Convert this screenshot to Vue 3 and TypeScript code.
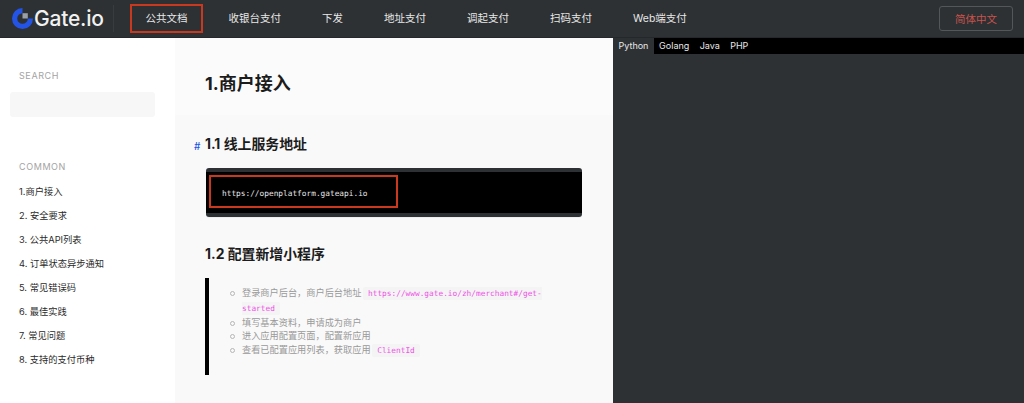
<script setup lang="ts">
const navItems: string[] = ['公共文档', '收银台支付', '下发', '地址支付', '调起支付', '扫码支付', 'Web端支付'];
const menu: string[] = ['1.商户接入', '2. 安全要求', '3. 公共API列表', '4. 订单状态异步通知', '5. 常见错误码', '6. 最佳实践', '7. 常见问题', '8. 支持的支付币种'];
const langs: string[] = ['Python', 'Golang', 'Java', 'PHP'];
</script>

<template>
  <div class="page">
    <header class="topbar">
      <div class="logo">
        <svg width="23" height="23" viewBox="0 0 23 23">
          <path d="M11.5 1a10.5 10.5 0 1 0 10.5 10.5h-5.2a5.3 5.3 0 1 1-5.3-5.3z" fill="#2354e6" />
          <rect x="11.5" y="6.2" width="5.3" height="5.3" fill="#9aa0a6" />
        </svg>
        <span class="logo-text">Gate.io</span>
      </div>
      <div class="logo-sep"></div>
      <nav class="nav">
        <a v-for="(item, i) in navItems" :key="item" class="nav-item" :class="{ marked: i === 0 }">{{ item }}</a>
      </nav>
      <button class="lang-btn">简体中文</button>
    </header>

    <div class="body">
      <aside class="sidebar">
        <div class="side-label">SEARCH</div>
        <div class="search"></div>
        <div class="side-label common">COMMON</div>
        <ul class="menu">
          <li v-for="m in menu" :key="m">{{ m }}</li>
        </ul>
      </aside>

      <main class="content">
        <div class="title-band">
          <h1>1.商户接入</h1>
        </div>
        <section class="doc">
          <h2 class="first"><span class="hash">#</span>1.1 线上服务地址</h2>
          <div class="code-block">
            <pre>https://openplatform.gateapi.io</pre>
            <span class="mark-box"></span>
          </div>
          <h2 class="second">1.2 配置新增小程序</h2>
          <blockquote>
            <ul>
              <li>登录商户后台，商户后台地址 <code>https://www.gate.io/zh/merchant#/get-started</code></li>
              <li>填写基本资料，申请成为商户</li>
              <li>进入应用配置页面，配置新应用</li>
              <li>查看已配置应用列表，获取应用 <code>ClientId</code></li>
            </ul>
          </blockquote>
        </section>
      </main>

      <section class="panel">
        <div class="tabs">
          <span v-for="(l, i) in langs" :key="l" class="tab" :class="{ active: i === 0 }">{{ l }}</span>
        </div>
      </section>
    </div>
  </div>
</template>

<style>
html, body {
  margin: 0;
  padding: 0;
  overflow: hidden;
}
</style>

<style scoped>
.page {
  width: 1024px;
  height: 403px;
  display: flex;
  flex-direction: column;
  overflow: hidden;
  font-family: Inter, "Noto Sans CJK SC", sans-serif;
  background: #fff;
}

.topbar {
  height: 37px;
  flex: none;
  display: flex;
  align-items: center;
  background: #2d3134;
  border-bottom: 1px solid #25282a;
  color: #fff;
}

.logo {
  display: flex;
  align-items: center;
  margin-left: 11px;
  width: 102px;
  height: 37px;
}

.logo-text {
  font-size: 21px;
  font-weight: 500;
  color: #f1f1f1;
  letter-spacing: -0.2px;
}

.logo-sep {
  width: 1px;
  height: 27px;
  background: #383c3f;
  margin-right: 16px;
}

.nav {
  display: flex;
  flex: 1;
}

.nav-item {
  position: relative;
  padding: 0 20.5px;
  font-size: 10.5px;
  line-height: 35px;
  color: #e8e8e8;
  white-space: nowrap;
}

.nav-item:first-child {
  margin-left: -5px;
}

.marked::after {
  content: "";
  position: absolute;
  left: 5px;
  right: 5px;
  top: 3px;
  bottom: 3px;
  border: 2px solid #c8391f;
}

.lang-btn {
  width: 74px;
  height: 25px;
  margin-right: 11px;
  background: transparent;
  border: 1px solid #54575a;
  border-radius: 3px;
  color: #c9534c;
  font-family: inherit;
  font-size: 10.5px;
  padding: 0;
}

.body {
  flex: 1;
  display: flex;
  min-height: 0;
}

.sidebar {
  width: 175px;
  flex: none;
  box-sizing: border-box;
  padding: 32px 20px 0 19px;
  background: #fff;
}

.side-label {
  font-size: 9px;
  line-height: 11px;
  letter-spacing: 0.6px;
  color: #a3a3a3;
}

.search {
  height: 25px;
  margin: 11px 0 0 -9px;
  background: #f7f7f7;
  border-radius: 3px;
}

.common {
  margin-top: 44px;
}

.menu {
  list-style: none;
  margin: 8px 0 0;
  padding: 0;
}

.menu li {
  height: 24px;
  line-height: 24px;
  font-size: 9.25px;
  color: #2b2b2b;
  white-space: nowrap;
}

.content {
  width: 438px;
  flex: none;
  background: #f9f9f9;
  overflow: hidden;
}

.title-band {
  height: 77px;
  box-sizing: border-box;
  padding: 34px 0 0 30px;
  background: #fbfbfb;
}

h1 {
  margin: 0;
  font-size: 18px;
  line-height: 24px;
  font-weight: 700;
  color: #1c1c1c;
}

.doc {
  padding-left: 30px;
  padding-right: 31px;
}

h2 {
  margin: 0;
  font-size: 13.9px;
  line-height: 20px;
  font-weight: 700;
  color: #1c1c1c;
}

.first {
  position: relative;
  padding-top: 19px;
}

.hash {
  position: absolute;
  left: -11px;
  top: 21px;
  font-size: 10px;
  color: #2354e6;
  font-weight: 500;
}

.code-block {
  position: relative;
  margin-top: 14px;
  margin-left: 1px;
  height: 49px;
  box-sizing: border-box;
  padding: 4px 0;
  background: #2d3134;
  border-radius: 3px;
  overflow: hidden;
  box-shadow: 0 1px 0 #eee;
}

pre {
  margin: 0;
  height: 41px;
  background: #000;
  color: #e8e8e8;
  font-family: "DejaVu Sans Mono", monospace;
  font-size: 7.8px;
  line-height: 43px;
  padding-left: 16px;
}

.mark-box {
  position: absolute;
  left: 3px;
  top: 7px;
  width: 189px;
  height: 33px;
  box-sizing: border-box;
  border: 2px solid #c8391f;
}

.second {
  margin-top: 27px;
}

blockquote {
  margin: 14px 0 0;
  height: 97px;
  box-sizing: border-box;
  border-left: 4px solid #000;
  padding: 8px 0 0 33px;
}

ul {
  margin: 0;
  padding: 0;
  list-style: none;
}

blockquote li {
  position: relative;
  font-size: 9.2px;
  line-height: 13.8px;
  color: #9a9a9a;
  width: 310px;
}

blockquote li::before {
  content: "";
  position: absolute;
  left: -12px;
  top: 5px;
  width: 3px;
  height: 3px;
  border: 1px solid #b5b5b5;
  border-radius: 50%;
}

code {
  font-family: "DejaVu Sans Mono", monospace;
  font-size: 7.8px;
  color: #f052e8;
  background: #f4f4f4;
  padding: 2px 5px;
  margin-left: -1px;
  border-radius: 2px;
}

.panel {
  flex: 1;
  background: #2d3134;
}

.tabs {
  display: flex;
  height: 16px;
  background: #000;
}

.tab {
  padding: 0 5.2px;
  font-size: 9px;
  line-height: 16px;
  color: #e8e8e8;
}

.tab.active {
  background: #2d3134;
  padding: 0 5.5px;
}
</style>
